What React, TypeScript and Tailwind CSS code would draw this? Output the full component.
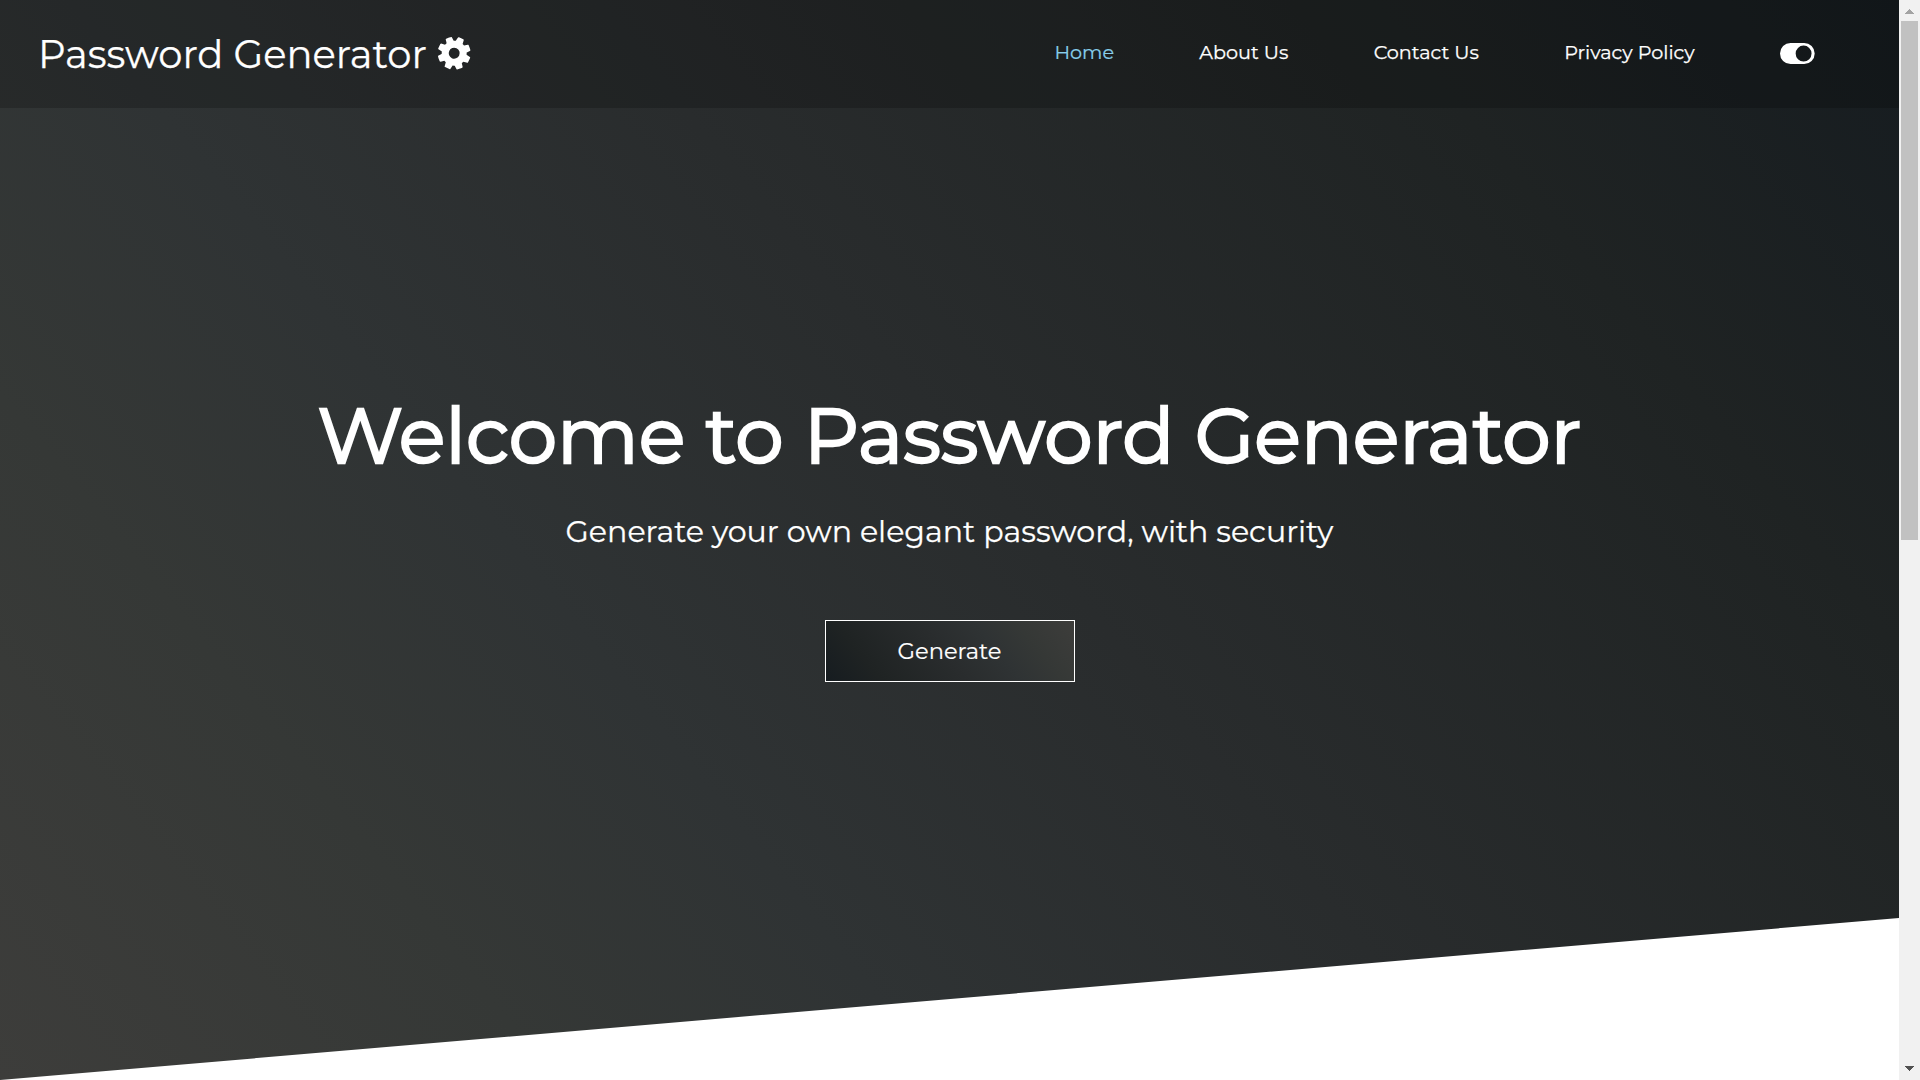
const navItems = [
  { label: 'Home', active: true },
  { label: 'About Us', active: false },
  { label: 'Contact Us', active: false },
  { label: 'Privacy Policy', active: false },
];

function GearIcon() {
  return (
    <svg viewBox="0 0 1792 1792" className="h-[38.4px] w-[38.4px] rotate-[25deg] fill-white">
      <path d="M1152 896q0-106-75-181t-181-75-181 75-75 181 75 181 181 75 181-75 75-181zm512-109v222q0 12-8 23t-20 13l-185 28q-19 54-39 91 35 50 107 138 10 12 10 25t-9 23q-27 37-99 108t-94 71q-12 0-26-9l-138-108q-44 23-91 38-16 136-29 186-7 28-36 28h-222q-14 0-24.5-8.5t-11.5-21.5l-28-184q-49-16-90-37l-141 107q-10 9-25 9-14 0-25-11-126-114-165-168-7-10-7-23 0-12 8-23 15-21 51-66.5t54-70.5q-27-50-41-99l-183-27q-13-2-21-12.5t-8-23.5v-222q0-12 8-23t19-13l186-28q14-46 39-92-40-57-107-138-10-12-10-24 0-10 9-23 26-36 98.500-107.500t94.500-71.500q13 0 26 10l138 107q44-23 91-38 16-136 29-186 7-28 36-28h222q14 0 24.500 8.500t11.500 21.500l28 184q49 16 90 37l142-107q9-9 24-9 13 0 25 10 129 119 165 170 7 8 7 22 0 12-8 23-15 21-51 66.500t-54 70.500q26 50 41 98l183 28q13 2 21 12.500t8 23.500z" />
    </svg>
  );
}

function ThemeToggle() {
  return (
    <button aria-label="Toggle theme" className="-mt-px block">
      <svg viewBox="0 0 35 21" className="h-[21px] w-[35px]">
        <path
          fillRule="evenodd"
          fill="#fff"
          d="M10.5 0H24.2a10.5 10.5 0 0 1 0 21H10.5a10.5 10.5 0 0 1 0-21zM23.6 2.6a7.95 7.95 0 1 0 0 15.9 7.95 7.95 0 0 0 0-15.9z"
        />
      </svg>
    </button>
  );
}

function Scrollbar() {
  return (
    <div className="flex h-full w-[21px] flex-col bg-[#f1f1f1]">
      <div className="flex h-[21px] shrink-0 items-start justify-center pt-[9px]">
        <svg viewBox="0 0 9 5" className="mr-px h-[5px] w-[9px] fill-[#a3a3a3]" shapeRendering="crispEdges">
          <path d="M4 0h1v1h1v1h1v1h1v1h1v1H0V4h1V3h1V2h1V1h1z" />
        </svg>
      </div>
      <div className="ml-0.5 h-[519px] w-[17px] bg-[#c1c1c1]" />
      <div className="flex-1" />
      <div className="flex h-[21px] shrink-0 items-start justify-center pt-[7px]">
        <svg viewBox="0 0 9 5" className="mr-px h-[5px] w-[9px] fill-[#505050]" shapeRendering="crispEdges">
          <path d="M0 0h9v1H8v1H7v1H6v1H5v1H4V4H3V3H2V2H1V1H0z" />
        </svg>
      </div>
    </div>
  );
}

export default function App() {
  return (
    <div className="flex h-[1080px] w-[1920px] overflow-hidden bg-white font-[Montserrat,Inter,sans-serif] text-white">
      <main className="flex w-[1899px] flex-col bg-linear-[51deg,#3d3d3b,#353836_20%,#2f3334_34%,#292c2d_53%,#1f2323_81%,#161c20] [clip-path:polygon(0_0,100%_0,100%_85%,0_100%)]">
        <header className="flex h-[108px] shrink-0 items-center justify-between bg-black/20 pr-[84px] pl-[38px]">
          <div className="flex items-center text-[38.5px] leading-none whitespace-nowrap [-webkit-text-stroke:0.25px_white]">
            <span className="pt-0.5">Password Generator</span>
            <span className="-mt-px ml-[7.800px]"><GearIcon /></span>
          </div>
          <nav className="flex items-center gap-[85.3px] text-[19.2px] leading-6">
            {navItems.map((item) => (
              <a
                key={item.label}
                href="#"
                className={
                  item.active
                    ? '-mt-1 whitespace-nowrap text-[#87ceeb] [-webkit-text-stroke:0.2px_#87ceeb]'
                    : '-mt-1 whitespace-nowrap text-white [-webkit-text-stroke:0.25px_white]'
                }
              >
                {item.label}
              </a>
            ))}
            <ThemeToggle />
          </nav>
        </header>
        <section className="flex flex-col items-center pt-[280px]">
          <h1 className="text-[77px] leading-[94px] whitespace-nowrap [-webkit-text-stroke:2.4px_white]">
            Welcome to Password Generator
          </h1>
          <p className="mt-8 text-[30.1px] leading-9 [-webkit-text-stroke:0.25px_white]">
            Generate your own elegant password, with security
          </p>
          <button className="mt-[70px] h-[62px] w-[250px] border border-white bg-linear-[51deg,#161c20,#1f2323_19%,#292c2d_47%,#2f3334_66%,#353836_80%,#3d3d3b] text-[22.6px] leading-none [-webkit-text-stroke:0.2px_white]">
            Generate
          </button>
        </section>
      </main>
      <Scrollbar />
    </div>
  );
}
